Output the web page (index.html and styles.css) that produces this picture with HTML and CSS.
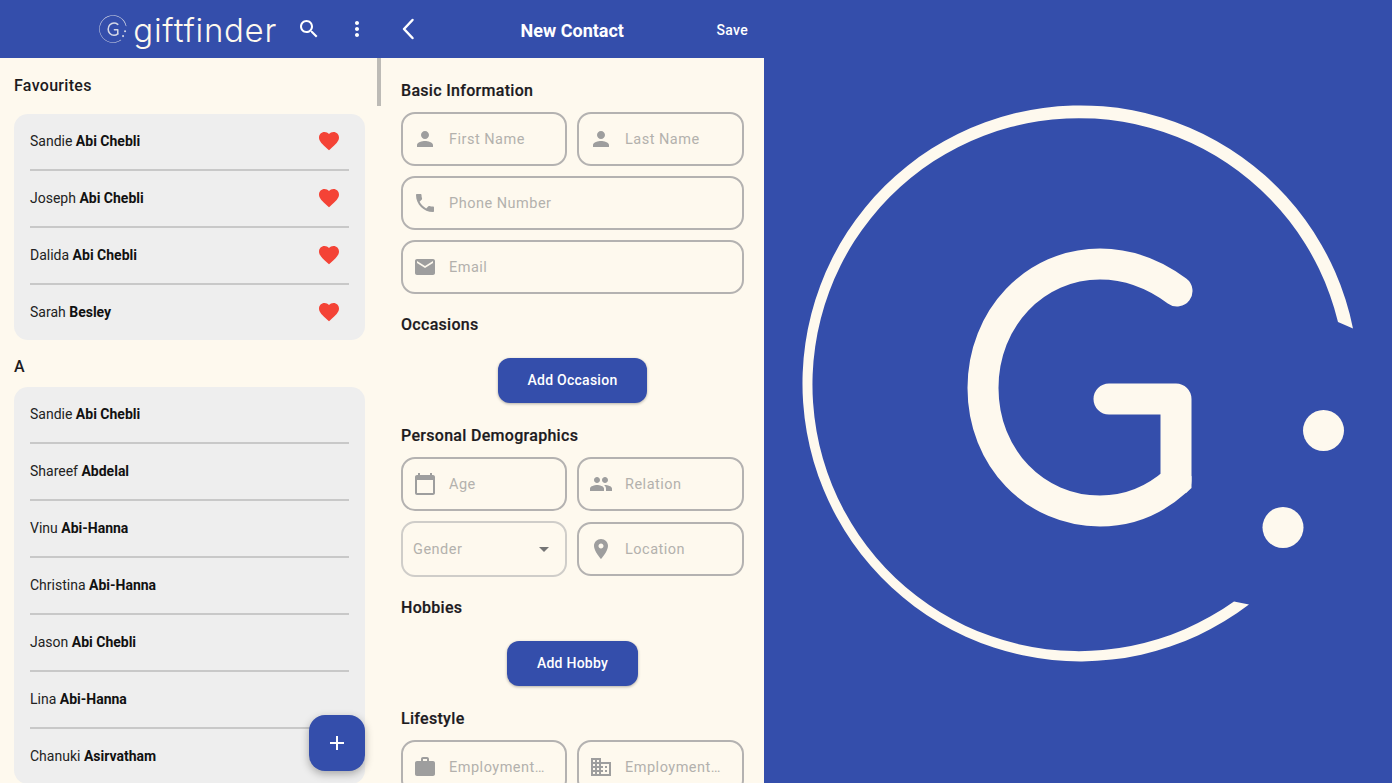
FILE: index.html
```html
<!DOCTYPE html>
<html lang="en">
<head>
  <meta charset="UTF-8">
  <title>Giftfinder</title>
  <link rel="stylesheet" href="styles.css">
</head>
<body>

  <svg class="defs" width="0" height="0">
    <defs>
      <g id="logo">
        <path fill="currentColor" d="M1353 328.500A278 278 0 1 0 1249 604.500L1234 601.400A266.500 266.500 0 1 1 1338 322z"/>
        <path fill="none" stroke="currentColor" stroke-width="31" stroke-linecap="round" stroke-linejoin="round" d="M1177 291C1150 271 1125 264 1100 264C1035 264 983 318 983 388C983 458 1035 511 1100 511C1130 511 1155 500 1176 481L1176 399L1109 399"/>
        <path fill="currentColor" d="M1191.500 476L1191.500 488L1186 493L1176 481z"/>
        <circle fill="currentColor" cx="1323.500" cy="430.500" r="20.500"/>
        <circle fill="currentColor" cx="1283" cy="527.500" r="20.500"/>
      </g>
      <symbol id="i-person" viewBox="0 0 24 24"><path d="M12 12c2.21 0 4-1.79 4-4s-1.79-4-4-4-4 1.79-4 4 1.79 4 4 4zm0 2c-2.67 0-8 1.34-8 4v2h16v-2c0-2.66-5.33-4-8-4z"/></symbol>
      <symbol id="i-phone" viewBox="0 0 24 24"><path d="M6.62 10.79c1.44 2.83 3.76 5.14 6.59 6.59l2.2-2.2c.27-.27.67-.36 1.02-.24 1.12.37 2.33.57 3.57.57.55 0 1 .45 1 1V20c0 .55-.45 1-1 1-9.39 0-17-7.61-17-17 0-.55.45-1 1-1h3.5c.55 0 1 .45 1 1 0 1.25.2 2.45.57 3.57.11.35.03.74-.25 1.02l-2.2 2.2z"/></symbol>
      <symbol id="i-email" viewBox="0 0 24 24"><path d="M20 4H4c-1.1 0-1.99.9-1.99 2L2 18c0 1.1.9 2 2 2h16c1.1 0 2-.9 2-2V6c0-1.1-.9-2-2-2zm0 4l-8 5-8-5V6l8 5 8-5v2z"/></symbol>
      <symbol id="i-calendar" viewBox="0 0 24 24"><path d="M20 3h-1V1h-2v2H7V1H5v2H4c-1.1 0-2 .9-2 2v16c0 1.1.9 2 2 2h16c1.1 0 2-.9 2-2V5c0-1.1-.9-2-2-2zm0 18H4V8h16v13z"/></symbol>
      <symbol id="i-people" viewBox="0 0 24 24"><path d="M16 11c1.66 0 2.99-1.34 2.99-3S17.66 5 16 5c-1.66 0-3 1.34-3 3s1.34 3 3 3zm-8 0c1.66 0 2.99-1.34 2.99-3S9.66 5 8 5C6.34 5 5 6.34 5 8s1.34 3 3 3zm0 2c-2.33 0-7 1.17-7 3.5V19h14v-2.500c0-2.33-4.67-3.500-7-3.500zm8 0c-.29 0-.62.02-.97.05 1.16.84 1.97 1.97 1.97 3.45V19h6v-2.500c0-2.33-4.67-3.500-7-3.500z"/></symbol>
      <symbol id="i-place" viewBox="0 0 24 24"><path d="M12 2C8.13 2 5 5.13 5 9c0 5.25 7 13 7 13s7-7.75 7-13c0-3.87-3.13-7-7-7zm0 9.500c-1.38 0-2.500-1.12-2.500-2.500s1.12-2.500 2.500-2.500 2.500 1.12 2.500 2.500-1.12 2.500-2.500 2.500z"/></symbol>
      <symbol id="i-work" viewBox="0 0 24 24"><path d="M20 6h-4V4c0-1.11-.89-2-2-2h-4c-1.11 0-2 .89-2 2v2H4c-1.11 0-1.99.89-1.99 2L2 19c0 1.11.89 2 2 2h16c1.11 0 2-.89 2-2V8c0-1.11-.89-2-2-2zm-6 0h-4V4h4v2z"/></symbol>
      <symbol id="i-business" viewBox="0 0 24 24"><path d="M12 7V3H2v18h20V7H12zM6 19H4v-2h2v2zm0-4H4v-2h2v2zm0-4H4V9h2v2zm0-4H4V5h2v2zm4 12H8v-2h2v2zm0-4H8v-2h2v2zm0-4H8V9h2v2zm0-4H8V5h2v2zm10 12h-8v-2h2v-2h-2v-2h2v-2h-2V9h8v10zm-2-8h-2v2h2v-2zm0 4h-2v2h2v-2z"/></symbol>
      <symbol id="i-heart" viewBox="0 0 24 24"><path d="M12 21.350l-1.450-1.320C5.400 15.360 2 12.280 2 8.500 2 5.420 4.420 3 7.500 3c1.740 0 3.410.81 4.500 2.090C13.090 3.810 14.760 3 16.500 3 19.580 3 22 5.420 22 8.500c0 3.780-3.400 6.860-8.550 11.540L12 21.350z"/></symbol>
    </defs>
  </svg>

  <div class="panel panel-list">
    <div class="appbar appbar-list">
      <svg class="brand-logo" viewBox="800 102 560 564"><use href="#logo"/></svg>
      <span class="brand-name">giftfinder</span>
      <svg class="bar-icon" viewBox="0 0 24 24"><path d="M15.500 14h-.79l-.28-.27C15.410 12.590 16 11.110 16 9.500 16 5.910 13.090 3 9.500 3S3 5.910 3 9.500 5.910 16 9.500 16c1.610 0 3.090-.59 4.230-1.570l.27.28v.79l5 4.990L20.490 19l-4.990-5zm-6 0C7.010 14 5 11.990 5 9.500S7.010 5 9.500 5 14 7.010 14 9.500 11.990 14 9.500 14z"/></svg>
      <svg class="bar-icon" viewBox="0 0 24 24"><path d="M12 8c1.100 0 2-.9 2-2s-.9-2-2-2-2 .9-2 2 .9 2 2 2zm0 2c-1.100 0-2 .9-2 2s.9 2 2 2 2-.9 2-2-.9-2-2-2zm0 6c-1.100 0-2 .9-2 2s.9 2 2 2 2-.9 2-2-.9-2-2-2z"/></svg>
    </div>

    <div class="contacts">
      <h2 class="group-title group-fav">Favourites</h2>
      <ul class="card">
        <li class="contact"><span>Sandie <b>Abi Chebli</b></span><svg class="heart"><use href="#i-heart"/></svg></li>
        <li class="contact"><span>Joseph <b>Abi Chebli</b></span><svg class="heart"><use href="#i-heart"/></svg></li>
        <li class="contact"><span>Dalida <b>Abi Chebli</b></span><svg class="heart"><use href="#i-heart"/></svg></li>
        <li class="contact"><span>Sarah <b>Besley</b></span><svg class="heart"><use href="#i-heart"/></svg></li>
      </ul>

      <h2 class="group-title">A</h2>
      <ul class="card">
        <li class="contact"><span>Sandie <b>Abi Chebli</b></span></li>
        <li class="contact"><span>Shareef <b>Abdelal</b></span></li>
        <li class="contact"><span>Vinu <b>Abi-Hanna</b></span></li>
        <li class="contact"><span>Christina <b>Abi-Hanna</b></span></li>
        <li class="contact"><span>Jason <b>Abi Chebli</b></span></li>
        <li class="contact"><span>Lina <b>Abi-Hanna</b></span></li>
        <li class="contact"><span>Chanuki <b>Asirvatham</b></span></li>
      </ul>
    </div>

    <div class="scroll-thumb"></div>
    <button class="fab">
      <svg viewBox="0 0 24 24"><path d="M19 13h-6v6h-2v-6H5v-2h6V5h2v6h6v2z"/></svg>
    </button>
  </div>

  <div class="panel panel-form">
    <div class="appbar appbar-form">
      <svg class="back" viewBox="0 0 14 24"><path d="M11.500 3L3 12l8.500 9"/></svg>
      <span class="form-title">New Contact</span>
      <span class="save">Save</span>
    </div>

    <div class="form">
      <h3 class="section-title first">Basic Information</h3>
      <div class="fields">
        <div class="field"><svg class="field-icon"><use href="#i-person"/></svg><span>First Name</span></div>
        <div class="field"><svg class="field-icon"><use href="#i-person"/></svg><span>Last Name</span></div>
        <div class="field wide"><svg class="field-icon"><use href="#i-phone"/></svg><span>Phone Number</span></div>
        <div class="field wide"><svg class="field-icon"><use href="#i-email"/></svg><span>Email</span></div>
      </div>

      <h3 class="section-title">Occasions</h3>
      <button class="add-btn add-occasion">Add Occasion</button>

      <h3 class="section-title">Personal Demographics</h3>
      <div class="fields">
        <div class="field"><svg class="field-icon"><use href="#i-calendar"/></svg><span>Age</span></div>
        <div class="field"><svg class="field-icon"><use href="#i-people"/></svg><span>Relation</span></div>
        <div class="field select">
          <span>Gender</span>
          <svg class="caret" viewBox="0 0 24 24"><path d="M7 10l5 5 5-5z"/></svg>
        </div>
        <div class="field"><svg class="field-icon"><use href="#i-place"/></svg><span>Location</span></div>
      </div>

      <h3 class="section-title">Hobbies</h3>
      <button class="add-btn add-hobby">Add Hobby</button>

      <h3 class="section-title">Lifestyle</h3>
      <div class="fields">
        <div class="field"><svg class="field-icon"><use href="#i-work"/></svg><span>Employment…</span></div>
        <div class="field"><svg class="field-icon"><use href="#i-business"/></svg><span>Employment…</span></div>
      </div>
    </div>
  </div>

  <div class="panel-brand">
    <svg class="big-logo" viewBox="764 0 628 783"><use href="#logo"/></svg>
  </div>

</body>
</html>
```

FILE: styles.css
```css
* {
  box-sizing: border-box;
}

html, body {
  height: 100%;
}

body {
  margin: 0;
  display: flex;
  overflow: hidden;
  font-family: Roboto, sans-serif;
  background-color: #344eab;
}

.defs {
  position: absolute;
}

.panel {
  position: relative;
  height: 100%;
  overflow: hidden;
  background-color: #fef9ee;
}

.panel-list {
  width: 381px;
}

.panel-form {
  width: 383px;
}

.panel-brand {
  flex: 1;
  color: #fef9ee;
}

.big-logo {
  display: block;
  width: 100%;
  height: 100%;
}

.appbar {
  display: flex;
  align-items: center;
  height: 58px;
  color: white;
  background-color: #344eab;
}

.appbar-list {
  justify-content: flex-end;
  padding-right: 12px;
}

.brand-logo {
  width: 28px;
  height: 28px;
  margin-right: 6px;
  color: #d5d8e6;
}

.brand-name {
  font-family: Inter, sans-serif;
  font-weight: 350;
  font-size: 33px;
  letter-spacing: 0.7px;
  line-height: 58px;
  margin-top: 2px;
  margin-right: 20px;
  color: #fef9ee;
}

.bar-icon {
  width: 24px;
  height: 24px;
  fill: white;
}

.bar-icon + .bar-icon {
  margin-left: 24px;
}

.contacts {
  padding: 18px 16px 0 14px;
}

.group-title {
  margin: 17px 0 10px 0;
  font-size: 16px;
  font-weight: 500;
  letter-spacing: 0.3px;
  line-height: 20px;
  color: #1d1b1e;
}

.group-fav {
  margin: 0 0 18px 0;
}

.card {
  list-style: none;
  margin: 0;
  padding: 0 16px;
  background-color: #eeeeee;
  border-radius: 14px;
}

.contact {
  display: flex;
  align-items: center;
  justify-content: space-between;
  height: 57px;
  padding-bottom: 1px;
  font-size: 14px;
  color: #222;
  border-bottom: 2px solid #c8c8c8;
}

.contact:last-child {
  height: 55px;
  border-bottom: none;
}

.contact b {
  font-weight: 700;
  color: #111;
}

.heart {
  width: 24px;
  height: 24px;
  margin-right: 8px;
  fill: #f44336;
}

.scroll-thumb {
  position: absolute;
  top: 58px;
  right: 0;
  width: 4px;
  height: 48px;
  background-color: #bdbbb6;
}

.fab {
  position: absolute;
  left: 309px;
  top: 715px;
  display: flex;
  align-items: center;
  justify-content: center;
  width: 56px;
  height: 56px;
  padding: 0;
  border: none;
  border-radius: 16px;
  background-color: #344eab;
  box-shadow: 0 3px 8px rgba(0, 0, 0, 0.3);
}

.fab svg {
  width: 24px;
  height: 24px;
  fill: white;
}

.appbar-form {
  position: relative;
  justify-content: space-between;
  padding: 2px 16px 0 20px;
}

.back {
  width: 14px;
  height: 24px;
  margin-top: -2px;
  fill: none;
  stroke: white;
  stroke-width: 2.500;
  stroke-linecap: round;
  stroke-linejoin: round;
}

.form-title {
  font-size: 18px;
  font-weight: 700;
  margin-left: 13px;
}

.save {
  font-size: 14px;
  font-weight: 500;
  letter-spacing: 0.3px;
  margin-top: -1px;
}

.form {
  padding: 0 20px;
}

.section-title {
  margin: 21px 0 11px 0;
  font-size: 16px;
  font-weight: 500;
  letter-spacing: 0.3px;
  line-height: 20px;
  color: #1d1b1e;
  -webkit-text-stroke: 0.2px #1d1b1e;
}

.section-title.first {
  margin-top: 23px;
}

.fields {
  display: grid;
  grid-template-columns: 166px 167px;
  gap: 10px;
  align-items: center;
}

.field {
  display: flex;
  align-items: center;
  gap: 12px;
  height: 54px;
  padding-left: 10px;
  border: 2px solid #b4b2b1;
  border-radius: 14px;
  font-size: 14.500px;
  letter-spacing: 0.5px;
  color: #b3b1ad;
}

.field.wide {
  grid-column: 1 / 3;
}

.field.select {
  justify-content: space-between;
  height: 56px;
  padding: 0 9px 0 10px;
  border-color: #cfcdc9;
}

.field-icon {
  width: 24px;
  height: 24px;
  flex-shrink: 0;
  fill: #9e9e9e;
}

.caret {
  width: 24px;
  height: 24px;
  fill: #757575;
}

.add-btn {
  display: block;
  height: 45px;
  margin: 23px auto 0 auto;
  padding: 0 0 2px 0;
  border: none;
  border-radius: 12px;
  font-family: Roboto, sans-serif;
  font-size: 14px;
  font-weight: 500;
  letter-spacing: 0.25px;
  color: white;
  background-color: #344eab;
  box-shadow: 0 1px 3px rgba(0, 0, 0, 0.3);
}

.add-occasion {
  width: 149px;
}

.add-hobby {
  width: 131px;
}

.add-btn + .section-title {
  margin-top: 23px;
}
```
